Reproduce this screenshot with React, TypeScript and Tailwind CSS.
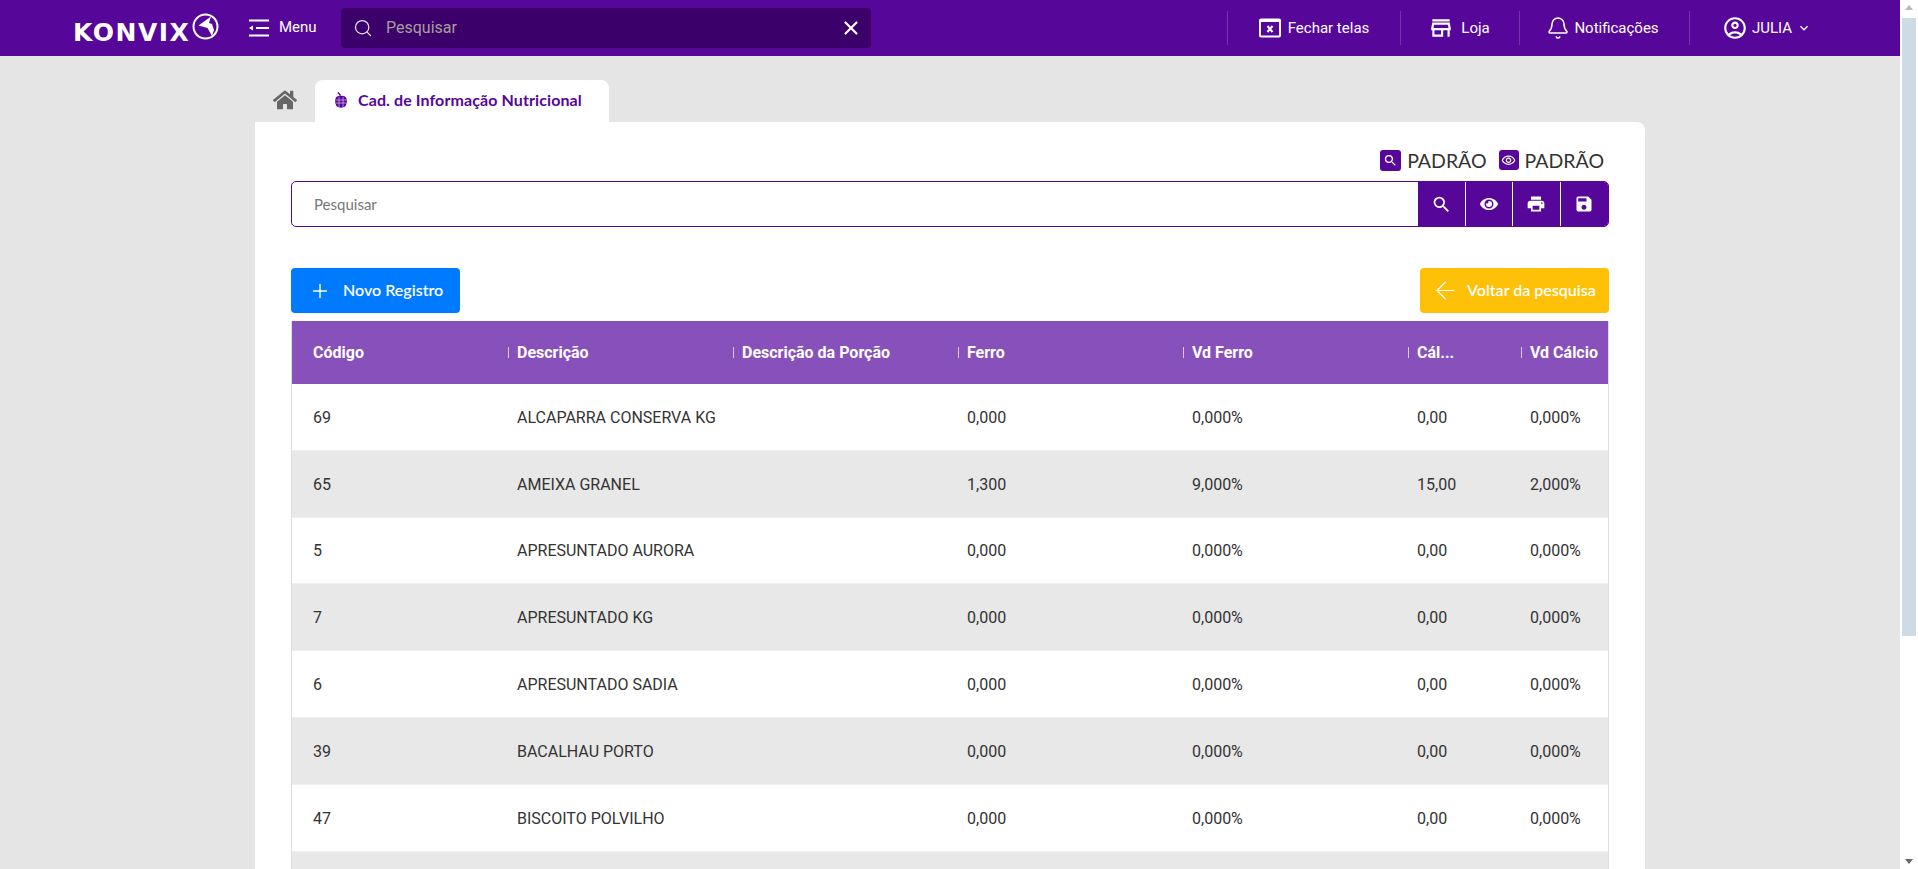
import React from 'react';
import { ArrowLeft, Bell, Plus, Search, X } from 'lucide-react';
import { FaEye, FaHome } from 'react-icons/fa';
import {
  MdKeyboardArrowDown,
  MdOutlineAccountCircle,
  MdOutlineStore,
  MdOutlineVisibility,
  MdPrint,
  MdSave,
  MdSearch,
} from 'react-icons/md';

interface Row {
  code: string;
  name: string;
  ferro: string;
  vdFerro: string;
  calcio: string;
  vdCalcio: string;
}

const rows: Row[] = [
  { code: '69', name: 'ALCAPARRA CONSERVA KG', ferro: '0,000', vdFerro: '0,000%', calcio: '0,00', vdCalcio: '0,000%' },
  { code: '65', name: 'AMEIXA GRANEL', ferro: '1,300', vdFerro: '9,000%', calcio: '15,00', vdCalcio: '2,000%' },
  { code: '5', name: 'APRESUNTADO AURORA', ferro: '0,000', vdFerro: '0,000%', calcio: '0,00', vdCalcio: '0,000%' },
  { code: '7', name: 'APRESUNTADO KG', ferro: '0,000', vdFerro: '0,000%', calcio: '0,00', vdCalcio: '0,000%' },
  { code: '6', name: 'APRESUNTADO SADIA', ferro: '0,000', vdFerro: '0,000%', calcio: '0,00', vdCalcio: '0,000%' },
  { code: '39', name: 'BACALHAU PORTO', ferro: '0,000', vdFerro: '0,000%', calcio: '0,00', vdCalcio: '0,000%' },
  { code: '47', name: 'BISCOITO POLVILHO', ferro: '0,000', vdFerro: '0,000%', calcio: '0,00', vdCalcio: '0,000%' },
  { code: '', name: '', ferro: '', vdFerro: '', calcio: '', vdCalcio: '' },
];

const columns = ['Código', 'Descrição', 'Descrição da Porção', 'Ferro', 'Vd Ferro', 'Cál...', 'Vd Cálcio'];

const gridCols = 'grid grid-cols-[217px_225px_225px_225px_225px_113px_1fr]';

// logo mark: circle with the arrow inside
const LogoMark = () => (
  <svg width="27" height="27" viewBox="0 0 27 27" fill="none" stroke="white">
    <circle cx="13.5" cy="13.5" r="12" strokeWidth="2" />
    <path d="M19 3.5 L6.5 12.5 L15.5 15 L20 23 L22 17 L20 11 L17 10 Z" fill="white" stroke="none" />
  </svg>
);

const MenuIcon = () => (
  <svg width="22" height="18" viewBox="0 0 22 18" fill="none" stroke="white" strokeWidth="1.8">
    <path d="M1 1.5H21M8 9H21M1 16.5H21" />
    <path d="M1 9 L5 6.5V11.5Z" fill="white" stroke="none" />
  </svg>
);

const CloseWindowIcon = () => (
  <svg width="22" height="20" viewBox="0 0 22 20" fill="none" stroke="white">
    <rect x="1" y="1.5" width="20" height="17" rx="1" strokeWidth="2" />
    <path d="M1 3H21" strokeWidth="2" />
    <path d="M8.5 8L13.5 14M13.5 8L8.5 14" strokeWidth="2" />
  </svg>
);

const AppleIcon = () => (
  <svg width="14" height="16" viewBox="0 0 14 16" fill="#57069a">
    <path d="M4 0.5 L6.5 3.5" stroke="#57069a" strokeWidth="1.4" />
    <path d="M3 4.5C5 3.5 9 3.5 11 4.5C13.5 6 13.5 12 11 14.5C9 16 5 16 3 14.5C0.5 12 0.5 6 3 4.5Z" />
    <path d="M1.5 8H12.5M1.5 11H12.5M5 5V15M9 5V15" stroke="#d9c6ea" strokeWidth="0.7" />
  </svg>
);

const NavItem: React.FC<{ icon: React.ReactNode; title: string; width: string }> = ({ icon, title, width }) => (
  <div className={`flex h-[34px] items-center justify-center gap-[7px] border-l border-[#7434ad] ${width}`}>
    {icon}
    <span className="text-[15px] text-white">{title}</span>
  </div>
);

const ToolButton: React.FC<{ children: React.ReactNode; last?: boolean }> = ({ children, last }) => (
  <div className={`flex h-full w-[47.5px] items-center justify-center ${last ? '' : 'border-r border-white'}`}>
    {children}
  </div>
);

export default function App() {
  return (
    <div className="flex h-screen overflow-hidden bg-white font-['Roboto',sans-serif]">
      <div className="flex h-full w-[1900px] flex-col">
        {/* top bar */}
        <header className="flex h-14 shrink-0 items-center bg-[#57069a]">
          <div className="ml-[73px] flex w-[160px] items-start">
            <span className="mt-[9px] w-[119px] font-['DejaVu_Sans',sans-serif] text-[25px] leading-[28px] font-bold tracking-[1.5px] text-white">
              KONVIX
            </span>
            <div className="mt-[3px]">
              <LogoMark />
            </div>
          </div>
          <div className="ml-[15px] flex w-[93px] items-center gap-[9px]">
            <MenuIcon />
            <span className="-mt-[2px] text-[15px] text-white">Menu</span>
          </div>
          <div className="flex h-10 w-[530px] items-center rounded bg-[#3b0069] pr-[9px] pl-[12px]">
            <Search className="size-5 text-[#e8e0ee]" strokeWidth={1.5} />
            <span className="ml-[13px] flex-1 text-[16px] text-[#a3a09f]">Pesquisar</span>
            <X className="size-[22px] text-white" strokeWidth={2.4} />
          </div>
          <div className="ml-[356px] flex items-center">
            <NavItem icon={<CloseWindowIcon />} title="Fechar telas" width="w-[173px]" />
            <NavItem icon={<MdOutlineStore className="size-[26px] text-white" />} title="Loja" width="w-[119px] pr-[2px]" />
            <NavItem
              icon={<Bell className="-mr-[3px] -ml-[1px] size-6 text-white" strokeWidth={1.5} />}
              title="Notificações"
              width="w-[170px] pr-[3px]"
            />
            <div className="flex h-[34px] items-center border-l border-[#7434ad] pl-[32px]">
              <MdOutlineAccountCircle className="size-[26px] text-white" />
              <span className="ml-[4px] text-[15px] text-white">JULIA</span>
              <MdKeyboardArrowDown className="ml-[4px] size-[16px] text-white" />
            </div>
          </div>
        </header>

        <main className="min-h-0 flex-1 overflow-hidden bg-[#e5e5e5] pt-6 pl-[255px]">
          {/* tabs */}
          <div className="flex h-[42px] items-stretch">
            <div className="flex w-[60px] items-center justify-center pb-[2px]">
              <FaHome className="ml-[-1px] size-[24px] text-[#666666]" />
            </div>
            <div className="flex w-[294px] items-center gap-[10px] rounded-t-lg bg-white pb-[2px] pl-[19px]">
              <AppleIcon />
              <span className="font-['Lato',sans-serif] text-[16px] font-bold tracking-[0.1px] text-[#57069a]">
                Cad. de Informação Nutricional
              </span>
            </div>
          </div>

          {/* card */}
          <section className="h-[800px] w-[1390px] rounded-tr-lg bg-white px-9 pt-7">
            <div className="flex h-5 items-center justify-end gap-[6px] pr-[5px] font-['Lato',sans-serif] text-[19.5px] text-[#333333]">
              <div className="flex size-[21px] items-center justify-center rounded-[3px] bg-[#57069a]">
                <MdSearch className="size-[15px] text-white" />
              </div>
              <span className="pt-[2px]">PADRÃO</span>
              <div className="ml-[6px] flex size-[20px] items-center justify-center rounded-[3px] bg-[#57069a]">
                <MdOutlineVisibility className="size-[15px] text-white" />
              </div>
              <span className="pt-[2px]">PADRÃO</span>
            </div>

            {/* search row */}
            <div className="mt-[11px] flex h-[46px] overflow-hidden rounded-[5px] border border-[#57069a]">
              <div className="flex flex-1 items-center pl-[22px] font-['Lato',sans-serif] text-[15px] text-[#777777]">
                Pesquisar
              </div>
              <div className="flex bg-[#57069a]">
                <ToolButton>
                  <MdSearch className="size-[21px] text-white" />
                </ToolButton>
                <ToolButton>
                  <FaEye className="size-[18px] text-white" />
                </ToolButton>
                <ToolButton>
                  <MdPrint className="size-5 text-white" />
                </ToolButton>
                <ToolButton last>
                  <MdSave className="size-5 text-white" />
                </ToolButton>
              </div>
            </div>

            {/* actions */}
            <div className="mt-[41px] flex justify-between font-['Lato',sans-serif] text-[16px] font-semibold text-white">
              <button className="flex h-[45px] w-[169px] items-center gap-[12px] rounded bg-[#007bff] pl-[18px]">
                <Plus className="size-[22px]" strokeWidth={1.6} />
                <span className="pb-[2px]">Novo Registro</span>
              </button>
              <button className="flex h-[45px] w-[189px] items-center gap-[7px] rounded bg-[#ffc107] pl-[11px]">
                <ArrowLeft className="size-[29px]" strokeWidth={1} />
                <span className="pb-[2px]">Voltar da pesquisa</span>
              </button>
            </div>

            {/* table */}
            <div className="mt-[8px] border-x border-[#dddddd]">
              <div className={`${gridCols} h-[63px] items-center bg-[#8850bb] text-[16px] font-bold text-white`}>
                {columns.map((col, i) => (
                  <div className="flex items-center whitespace-nowrap" key={col}>
                    {i === 0 ? (
                      <span className="pl-[21px]">{col}</span>
                    ) : (
                      <>
                        <span className="mr-[8px] -ml-px h-[11px] w-px bg-[#d9c8ea]" />
                        <span>{col}</span>
                      </>
                    )}
                  </div>
                ))}
              </div>
              {rows.map((row, i) => (
                <div
                  className={`${gridCols} h-[66.8px] items-center border-b border-[#f0f0f0] pt-[2px] text-[16px] text-[#333333] ${
                    i % 2 === 1 ? 'bg-[#e8e8e8]' : 'bg-white'
                  }`}
                  key={i}
                >
                  <div className="pl-[21px]">{row.code}</div>
                  <div className="pl-[8px] whitespace-nowrap">{row.name}</div>
                  <div />
                  <div className="pl-[8px]">{row.ferro}</div>
                  <div className="pl-[8px]">{row.vdFerro}</div>
                  <div className="pl-[8px]">{row.calcio}</div>
                  <div className="pl-[8px]">{row.vdCalcio}</div>
                </div>
              ))}
            </div>
          </section>
        </main>
      </div>

      {/* page scrollbar */}
      <div className="flex h-full w-[18px] shrink-0 flex-col items-center justify-between bg-white">
        <div className="flex w-full flex-col items-center">
          <div className="mt-[5px] h-0 w-0 border-x-[4px] border-b-[5px] border-x-transparent border-b-[#b8b8b8]" />
          <div className="mt-[8px] h-[618px] w-[14px] bg-[#cfdbe4]" />
        </div>
        <div className="mb-[5px] h-0 w-0 border-x-[4px] border-t-[5px] border-x-transparent border-t-[#666666]" />
      </div>
    </div>
  );
}
